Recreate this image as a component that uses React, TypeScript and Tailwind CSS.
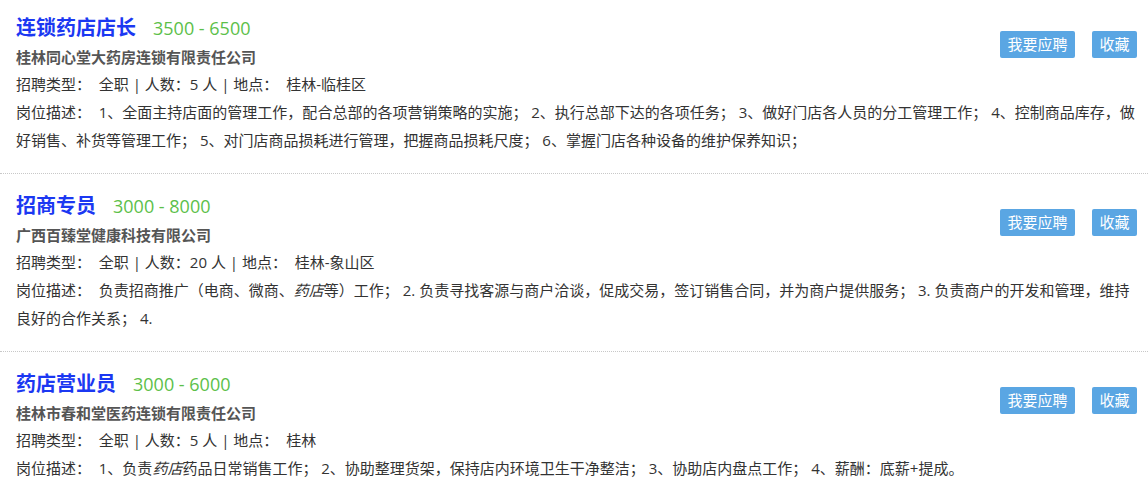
import type { ReactNode } from 'react';

interface Job {
  title: string;
  salary: string;
  company: string;
  count: string;
  place: string;
  desc: ReactNode;
}

const jobs: Job[] = [
  {
    title: '连锁药店店长',
    salary: '3500 - 6500',
    company: '桂林同心堂大药房连锁有限责任公司',
    count: '5',
    place: '桂林-临桂区',
    desc: (
      <>
        1、全面主持店面的管理工作，配合总部的各项营销策略的实施； 2、执行总部下达的各项任务； 3、做好门店各人员的分工管理工作； 4、控制商品库存，做好销售、补货等管理工作； 5、对门店商品损耗进行管理，把握商品损耗尺度； 6、掌握门店各种设备的维护保养知识；
      </>
    ),
  },
  {
    title: '招商专员',
    salary: '3000 - 8000',
    company: '广西百臻堂健康科技有限公司',
    count: '20',
    place: '桂林-象山区',
    desc: (
      <>
        负责招商推广（电商、微商、<em>药店</em>等）工作； 2. 负责寻找客源与商户洽谈，促成交易，签订销售合同，并为商户提供服务； 3. 负责商户的开发和管理，维持良好的合作关系； 4.
      </>
    ),
  },
  {
    title: '药店营业员',
    salary: '3000 - 6000',
    company: '桂林市春和堂医药连锁有限责任公司',
    count: '5',
    place: '桂林',
    desc: (
      <>
        1、负责<em>药店</em>药品日常销售工作； 2、协助整理货架，保持店内环境卫生干净整洁； 3、协助店内盘点工作； 4、薪酬：底薪+提成。
      </>
    ),
  },
];

const JobItem = ({ job, first }: { job: Job; first: boolean }) => {
  return (
    <div
      className={`pl-4 pr-[11px] pb-[19px] border-b border-dotted border-[#c8c8c8] ${
        first ? 'pt-3' : 'pt-4'
      }`}
    >
      <div className="flex justify-between items-start">
        <div>
          <div className="flex items-center h-8">
            <span className="text-[20px] font-bold text-[#1b38f2]">{job.title}</span>
            <span className="ml-[17px] text-[18px] text-[#5cbf4a]">{job.salary}</span>
          </div>
          <div className="text-[15px] font-bold text-[#555] leading-[27px]">{job.company}</div>
        </div>
        <div className="flex gap-[17px] mt-[19px]">
          <button className="h-[27px] w-[75px] rounded-[2px] bg-[#5aa6e3] text-white text-[15px] leading-[27px]">
            我要应聘
          </button>
          <button className="h-[27px] w-[45px] rounded-[2px] bg-[#5aa6e3] text-white text-[15px] leading-[27px]">
            收藏
          </button>
        </div>
      </div>
      <div className="text-[15px] text-[#333] leading-[27px]">
        招聘类型：&nbsp; 全职 | 人数：{job.count} 人 | 地点：&nbsp; {job.place}
      </div>
      <div className="text-[15px] text-[#333] leading-7">岗位描述：&nbsp; {job.desc}</div>
    </div>
  );
};

export default function App() {
  return (
    <div
      className="w-[1148px] h-[481px] overflow-hidden bg-white"
      style={{ fontFamily: '"Open Sans", "Noto Sans CJK SC", sans-serif' }}
    >
      {jobs.map((job, i) => (
        <JobItem key={job.title} job={job} first={i === 0} />
      ))}
    </div>
  );
}
